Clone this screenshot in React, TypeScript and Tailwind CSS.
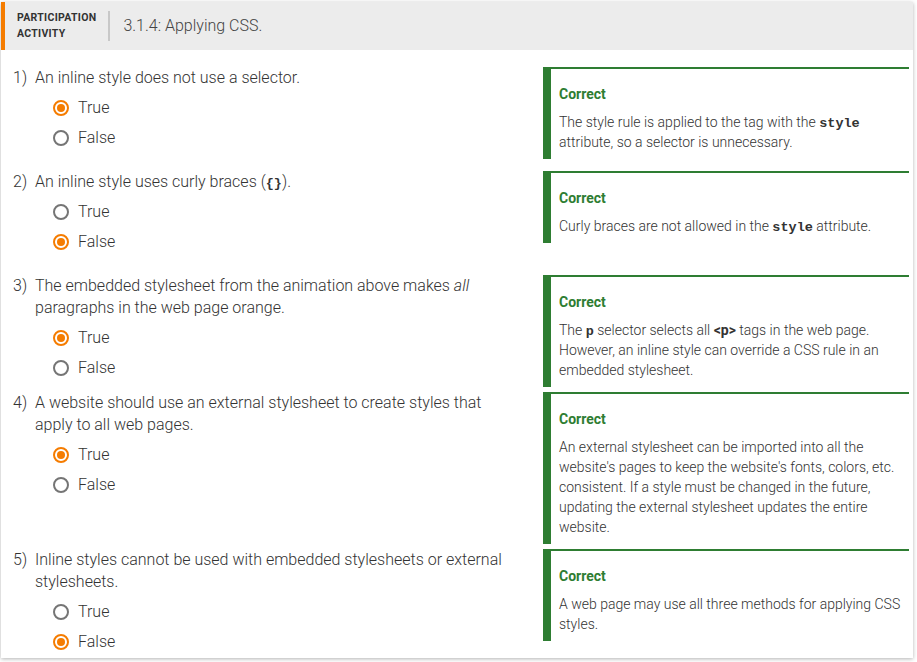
import React from 'react';

type Question = {
    num: number;
    text: React.ReactNode;
    answer: 'True' | 'False';
    feedback: React.ReactNode;
};

const Code: React.FC<{ children: React.ReactNode }> = ({ children }) => (
    <code className="font-['Liberation_Mono','DejaVu_Sans_Mono',monospace] font-bold text-[13.5px] leading-none text-[#333]">{children}</code>
);

const questions: Question[] = [
    {
        num: 1,
        text: 'An inline style does not use a selector.',
        answer: 'True',
        feedback: (
            <>
                The style rule is applied to the tag with the <Code>style</Code> attribute, so a selector is unnecessary.
            </>
        ),
    },
    {
        num: 2,
        text: (
            <>
                An inline style uses curly braces (<Code>{'{}'}</Code>).
            </>
        ),
        answer: 'False',
        feedback: (
            <>
                Curly braces are not allowed in the <Code>style</Code> attribute.
            </>
        ),
    },
    {
        num: 3,
        text: (
            <>
                The embedded stylesheet from the animation above makes <em>all</em> paragraphs in the web page orange.
            </>
        ),
        answer: 'True',
        feedback: (
            <>
                The <Code>p</Code> selector selects all <strong className="font-bold text-[#333]">&lt;p&gt;</strong> tags in the web page. However, an inline style can override a CSS rule in an embedded stylesheet.
            </>
        ),
    },
    {
        num: 4,
        text: 'A website should use an external stylesheet to create styles that apply to all web pages.',
        answer: 'True',
        feedback: "An external stylesheet can be imported into all the website's pages to keep the website's fonts, colors, etc. consistent. If a style must be changed in the future, updating the external stylesheet updates the entire website.",
    },
    {
        num: 5,
        text: 'Inline styles cannot be used with embedded stylesheets or external stylesheets.',
        answer: 'False',
        feedback: 'A web page may use all three methods for applying CSS styles.',
    },
];

const Radio: React.FC<{ checked: boolean; label: string }> = ({ checked, label }) => (
    <div className="flex items-center h-[30px]">
        <span
            className={`flex items-center justify-center w-4 h-4 rounded-full border-2 ${checked ? 'border-[#f57c00]' : 'border-[#757575]'}`}
        >
            {checked && <span className="w-2 h-2 rounded-full bg-[#f57c00]" />}
        </span>
        <span className="ml-[9px] text-[16px] font-light text-[#333]">{label}</span>
    </div>
);

const App: React.FC = () => {
    return (
        <div className="w-[917px] h-[662px] bg-white pl-px pt-[2px] font-['Roboto','Liberation_Sans',sans-serif]">
            <div className="w-[912px] bg-white shadow-[0_1px_4px_rgba(0,0,0,0.3)]">
                <div className="flex items-center h-12 bg-[#ececec] border-l-4 border-[#f57c00]">
                    <div className="pl-3 pr-3 text-[10.5px] leading-4 font-bold text-[#333] tracking-[0.3px]">
                        PARTICIPATION
                        <br />
                        ACTIVITY
                    </div>
                    <div className="w-[2px] h-[30px] bg-[#c8c8c8]" />
                    <h2 className="pl-[13px] text-[16px] font-light text-[#444]">3.1.4: Applying CSS.</h2>
                </div>

                <div className="pt-4 pb-px">
                    {questions.map((q, i) => (
                        <div
                            key={q.num}
                            className={`flex items-start ${i < questions.length - 1 ? 'min-h-[104px]' : ''}`}
                        >
                            <div className={`w-[542px] pl-3 pr-8 ${i < questions.length - 1 ? 'pb-[7px]' : ''}`}>
                                <div className="flex pt-px text-[16px] leading-[22px] font-light text-[#333]">
                                    <span className="w-[22px] shrink-0">{q.num})</span>
                                    <p>{q.text}</p>
                                </div>
                                <div className="mt-1 pl-[40px]">
                                    <Radio checked={q.answer === 'True'} label="True" />
                                    <Radio checked={q.answer === 'False'} label="False" />
                                </div>
                            </div>
                            <div className="w-[366px] mt-px mb-1 border-l-8 border-t-2 border-[#2e7d32] pl-2 pr-2 pt-4 pb-[7px]">
                                <div className="text-[14px] leading-[18px] font-bold text-[#2e7d32]">Correct</div>
                                <p className="mt-[9px] text-[14px] leading-5 font-light text-[#333]">{q.feedback}</p>
                            </div>
                        </div>
                    ))}
                </div>
            </div>
        </div>
    );
};

export default App;
